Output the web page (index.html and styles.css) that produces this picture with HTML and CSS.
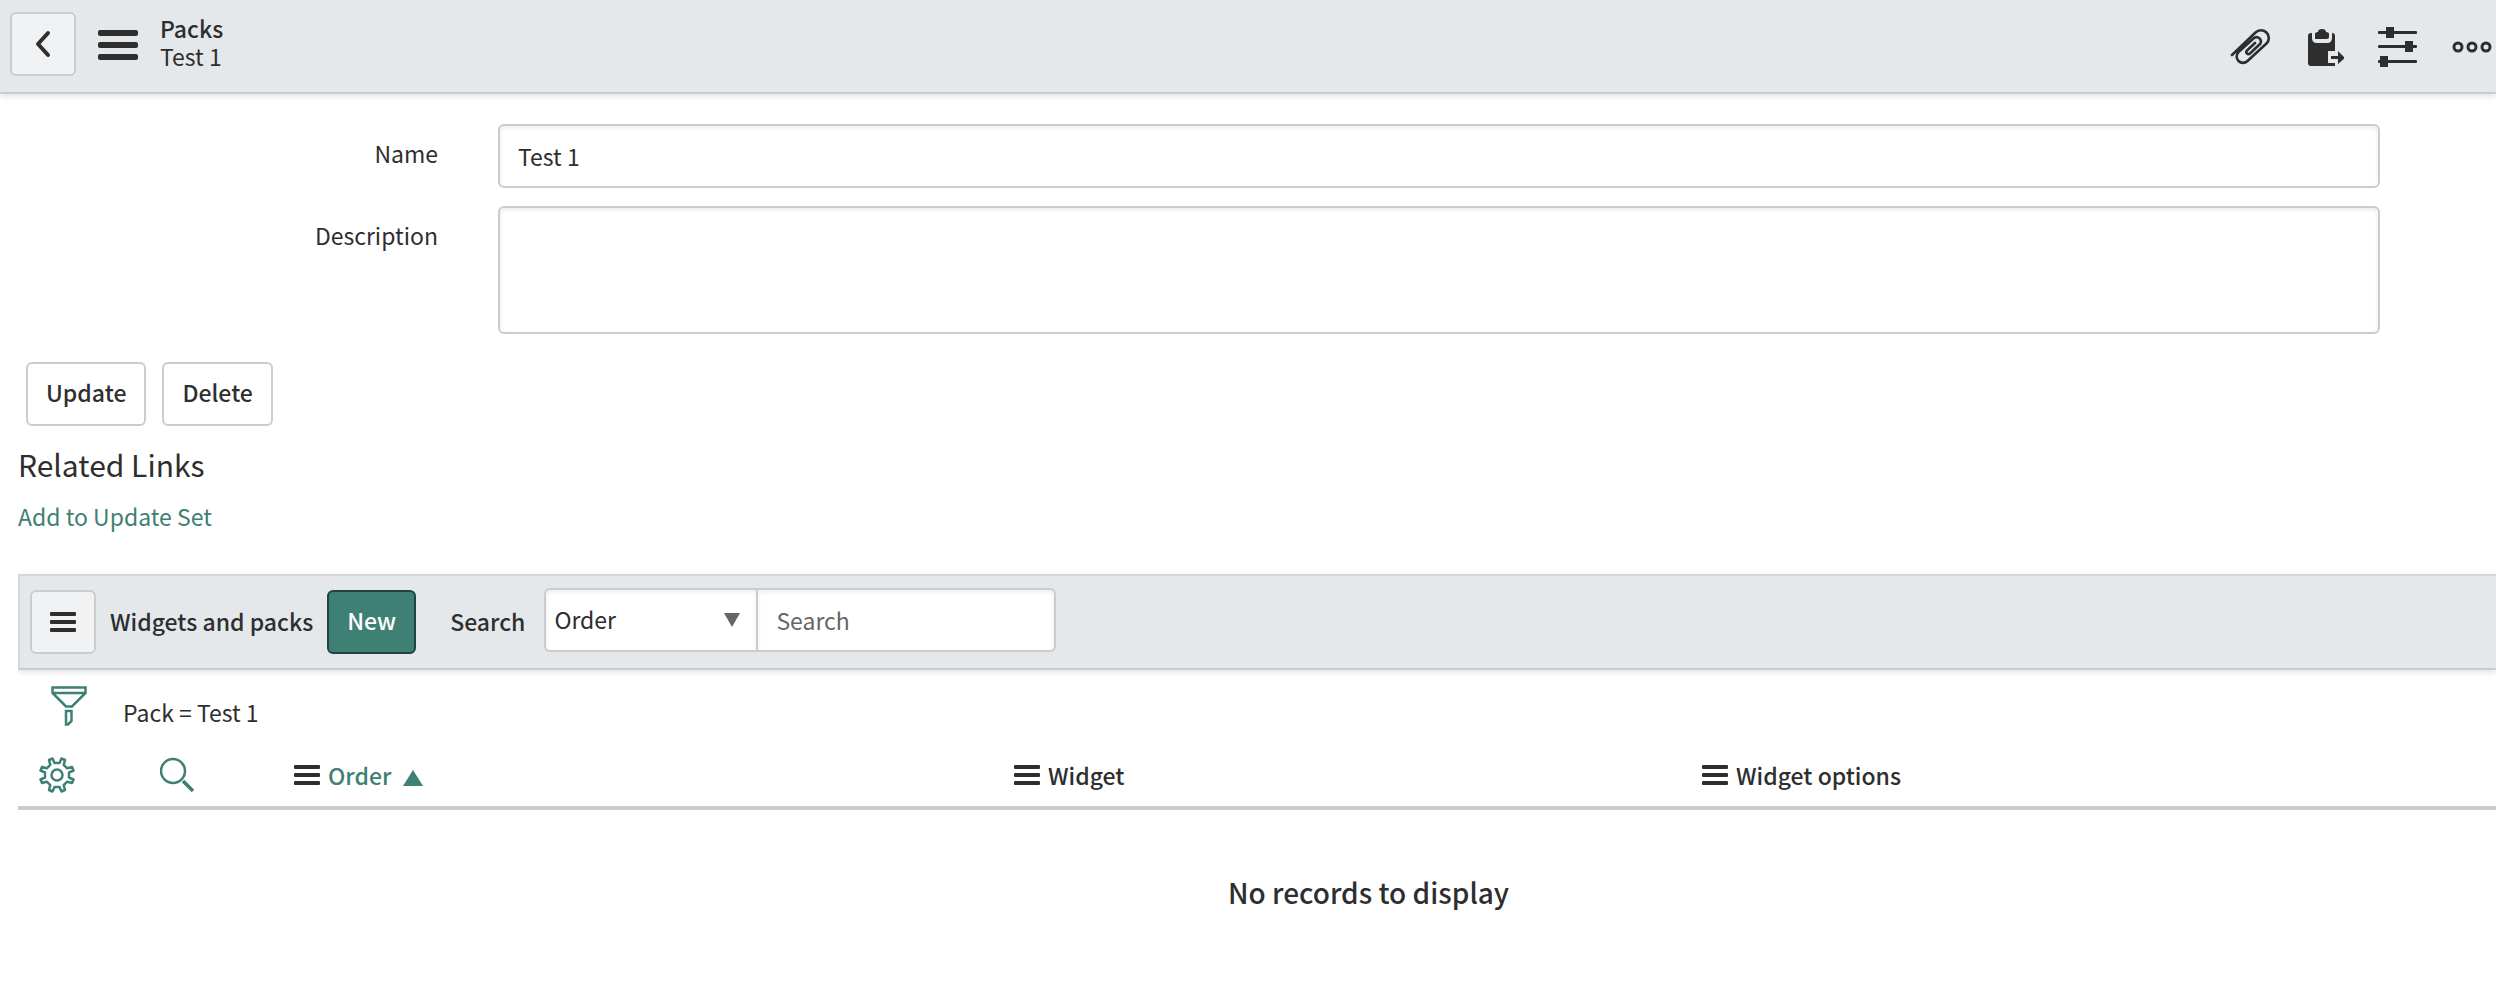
FILE: index.html
```html
<!DOCTYPE html>
<html lang="en">
<head>
<meta charset="utf-8">
<meta name="viewport" content="width=device-width, initial-scale=1">
<title>Packs | Test 1</title>
<link rel="stylesheet" href="styles.css">
</head>
<body>
<svg class="sprite" aria-hidden="true">
  <symbol id="bars" viewBox="0 0 26 20">
    <rect width="26" height="4" rx="1"/><rect y="8" width="26" height="4" rx="1"/><rect y="16" width="26" height="4" rx="1"/>
  </symbol>
</svg>

<header class="form-header">
  <button class="btn btn-icon" type="button" aria-label="Back">
    <svg width="16" height="28" viewBox="0 0 16 28" fill="none" stroke="currentColor" stroke-width="4" stroke-linecap="round" stroke-linejoin="round"><path d="M13 3 3 14 13 25"/></svg>
  </button>
  <button class="plain menu-btn" type="button" aria-label="Form menu">
    <svg width="40" height="30" viewBox="0 0 40 30" fill="currentColor"><rect width="40" height="6" rx="2"/><rect y="12" width="40" height="6" rx="2"/><rect y="24" width="40" height="6" rx="2"/></svg>
  </button>
  <h1 class="form-title"><span class="medium">Packs</span><br>Test 1</h1>
  <div class="header-tools">
    <button class="plain" type="button" aria-label="Attachments">
      <svg width="40" height="40" viewBox="0 0 40 40" fill="none" stroke="currentColor" stroke-width="2.6" stroke-linecap="round" stroke-linejoin="round"><path d="M2 28 25.500 5.500A7.800 7.800 0 0 1 37 16L17.500 34A6.300 6.300 0 0 1 8.500 25L24 11A4.300 4.300 0 0 1 30 17L20 26.500A2 2 0 0 1 17 23.500L25 16"/></svg>
    </button>
    <button class="plain" type="button" aria-label="Copy record">
      <svg width="40" height="40" viewBox="-4 -1 40 40" fill="currentColor"><path d="M3 5H4V10Q4 15 9 15H19Q24 15 24 10V5Q27 5 27 8V23H20V35H27V38H3Q0 38 0 35V8Q0 5 3 5Z"/><path d="M7 11V6Q7 4 10 4 10 1 14 1T18 4Q21 4 21 6V9Q21 11 19 11Z"/><path d="M23 28H30V23L37 30 30 36V31H23Z"/></svg>
    </button>
    <button class="plain" type="button" aria-label="Personalize form">
      <svg width="40" height="40" viewBox="0 0 40 40" fill="currentColor"><rect y="4" width="39" height="3" rx="1"/><rect x="8" width="8" height="11"/><rect y="18" width="39" height="3" rx="1"/><rect x="27" y="14" width="8" height="11"/><rect y="33" width="39" height="3" rx="1"/><rect x="2" y="29" width="8" height="11"/></svg>
    </button>
    <button class="plain" type="button" aria-label="More options">
      <svg width="40" height="40" viewBox="0 0 40 40" fill="none" stroke="currentColor" stroke-width="3"><circle cx="6" cy="20" r="4"/><circle cx="20" cy="20" r="4"/><circle cx="34" cy="20" r="4"/></svg>
    </button>
  </div>
</header>

<main>
  <form>
    <div class="fields">
      <label for="name">Name</label>
      <input class="control" id="name" type="text" value="Test 1">
      <label for="description">Description</label>
      <textarea class="control" id="description"></textarea>
    </div>
    <div class="actions">
      <button class="btn" type="button">Update</button>
      <button class="btn" type="button">Delete</button>
    </div>
  </form>

  <section class="related">
    <h2>Related Links</h2>
    <a href="#">Add to Update Set</a>
  </section>

  <section class="list">
    <div class="list-bar">
      <button class="btn btn-icon" type="button" aria-label="List menu"><svg class="bars"><use href="#bars"/></svg></button>
      <h2 class="list-title">Widgets and packs</h2>
      <button class="btn btn-primary" type="button">New</button>
      <label class="search-label" for="search">Search</label>
      <div class="search-group">
        <div class="select-wrap">
          <select class="control" aria-label="Search field"><option>Order</option></select>
          <svg class="caret" width="16" height="14" viewBox="0 0 16 14" fill="#666"><path d="M0 0H16L8 14Z"/></svg>
        </div>
        <input class="control" id="search" type="text" placeholder="Search">
      </div>
    </div>
    <div class="filter">
      <button class="plain green" type="button" aria-label="Show filter">
        <svg width="36" height="40" viewBox="0 0 36 40" fill="none" stroke="currentColor" stroke-width="2.500"><path d="M1.500 1.500H34.500V7L21 20.500H15L1.500 7ZM1.500 7H34.500M15 25H20.500V35L17 38.500H15Z"/></svg>
      </button>
      <span>Pack = Test 1</span>
    </div>
    <table>
      <colgroup><col class="col-gear"><col class="col-find"><col class="col-order"><col class="col-widget"><col></colgroup>
      <thead>
        <tr>
          <th class="cell-gear"><button class="plain green" type="button" aria-label="Personalize list">
            <svg width="36" height="36" viewBox="-18 -18 36 36" fill="none" stroke="currentColor" stroke-width="2.500" stroke-linejoin="round"><path d="M-2.500-12H2.500L4.500-16.500 8-15 6.700-10.200 10.200-6.700 15-8 16.500-4.500 12-2.500V2.500L16.500 4.500 15 8 10.200 6.700 6.700 10.200 8 15 4.500 16.500 2.500 12H-2.500L-4.500 16.500-8 15-6.700 10.200-10.200 6.700-15 8-16.500 4.500-12 2.500V-2.500L-16.500-4.500-15-8-10.200-6.700-6.700-10.200-8-15-4.500-16.500Z"/><circle r="5.500"/></svg>
          </button></th>
          <th><button class="plain green" type="button" aria-label="Search columns">
            <svg width="36" height="36" viewBox="0 0 36 36" fill="none" stroke="currentColor"><circle cx="13" cy="14" r="12" stroke-width="2.500"/><path d="M23 24 33 34" stroke-width="3.500"/></svg>
          </button></th>
          <th><span class="head"><svg class="bars"><use href="#bars"/></svg><a href="#">Order</a><svg class="sort" width="20" height="16" viewBox="0 0 20 16" fill="#3e8074"><path d="M0 16 10 0 20 16Z"/></svg></span></th>
          <th><span class="head"><svg class="bars"><use href="#bars"/></svg>Widget</span></th>
          <th><span class="head"><svg class="bars"><use href="#bars"/></svg>Widget options</span></th>
        </tr>
      </thead>
      <tbody>
        <tr><td class="empty" colspan="5">No records to display</td></tr>
      </tbody>
    </table>
  </section>
</main>
</body>
</html>
```
FILE: styles.css
```css
* { box-sizing: border-box; }

body {
  margin: 0;
  background: #fff;
  color: #2e2e2e;
  font-family: "Noto Sans CJK SC", "Open Sans", sans-serif;
  font-size: 23px;
  line-height: 28px;
}

h1, h2 { margin: 0; font-weight: 400; }
svg { display: block; flex: none; }
button, input, select, textarea { font: inherit; color: inherit; }
a { color: #3e8074; text-decoration: none; }

.sprite { position: absolute; width: 0; height: 0; }
.bars { width: 26px; height: 20px; fill: #2e2e2e; }
.medium { font-weight: 500; }

.plain { display: block; padding: 0; border: 0; background: none; cursor: pointer; }
.green { color: #3e8074; }

.btn {
  height: 64px;
  padding: 0 18px 4px;
  border: 2px solid #ccc;
  border-radius: 6px;
  background: #fff;
  font-weight: 500;
  cursor: pointer;
}
.btn-icon {
  display: grid;
  place-items: center;
  width: 66px;
  padding: 0;
  background: #f1f2f4;
}
.btn-primary { border-color: #1f453e; background: #3e8074; color: #fff; }

.control {
  height: 64px;
  padding: 0 18px;
  border: 2px solid #ccc;
  border-radius: 6px;
  background: #fff;
  box-shadow: inset 0 2px 4px rgba(0, 0, 0, .08);
}

.form-header {
  display: flex;
  align-items: center;
  height: 94px;
  padding: 0 4px 4px 10px;
  border-bottom: 2px solid #ccc;
  background: #e5e8eb;
  box-shadow: 0 2px 6px rgba(46, 30, 20, .14);
}
.menu-btn { margin: 2px 22px 0; }
.form-title { padding-bottom: 4px; font-size: 23px; }
.header-tools { display: flex; gap: 34px; margin-left: auto; padding-top: 6px; }

.fields {
  display: grid;
  grid-template-columns: clamp(160px, 19%, 438px) 1fr;
  gap: 18px 60px;
  padding: 30px 116px 0 0;
}
.fields label { padding-top: 15px; text-align: right; }
.fields textarea { height: 128px; resize: none; }

.actions { display: flex; gap: 16px; padding: 28px 26px 0; }

.related { padding: 20px 18px 0; }
.related h2 { font-size: 30px; line-height: 36px; margin-bottom: 20px; }

.list { margin: 44px 0 0 18px; overflow-x: clip; }
.list-bar {
  display: flex;
  align-items: center;
  height: 96px;
  padding-left: 10px;
  border: solid #d3d9dd;
  border-width: 2px 0 2px 2px;
  border-bottom-color: #ccc;
  background: #e5e8eb;
  box-shadow: 0 2px 6px rgba(46, 30, 20, .14);
}
.list-title { margin: 0 14px; padding-bottom: 2px; font-size: 23px; font-weight: 500; }
.search-label { margin: 0 19px 0 34px; padding-bottom: 2px; font-weight: 500; }
.search-group { display: flex; margin-bottom: 4px; }
.select-wrap { position: relative; width: 214px; }
.select-wrap .control {
  width: 100%;
  padding: 0 8px 2px;
  border-radius: 6px 0 0 6px;
  appearance: none;
}
.caret { position: absolute; top: 25px; right: 18px; pointer-events: none; }
.search-group > .control { width: 300px; margin-left: -2px; border-radius: 0 6px 6px 0; }
.search-group ::placeholder { color: #666; opacity: 1; }

.filter { display: flex; align-items: center; gap: 36px; padding: 16px 0 0 33px; }
.filter span { padding-top: 12px; }

/* The list is a little wider than its frame and is cut off at the right edge */
table { width: 109%; border-collapse: collapse; table-layout: fixed; }
.col-gear { width: 142px; }
.col-find { width: 134px; }
.col-order { width: 720px; }
.col-widget { width: 688px; }
th { height: 82px; padding: 18px 0 0; border-bottom: 4px solid #ccc; font-weight: 500; text-align: left; }
.cell-gear { padding-left: 21px; }
.head { display: flex; align-items: center; gap: 8px; }
.sort { margin: 6px 0 0 4px; }
.empty { padding: 62px 0; font-size: 28px; line-height: 40px; font-weight: 500; text-align: center; }
```
